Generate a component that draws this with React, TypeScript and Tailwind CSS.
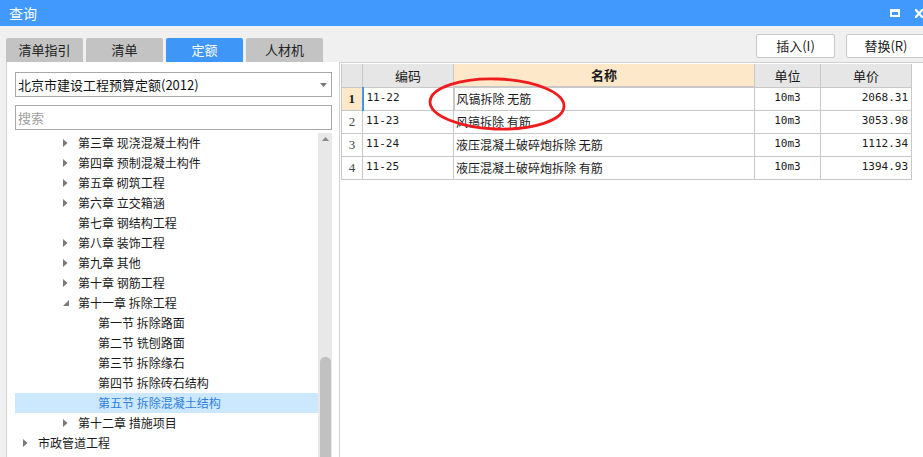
import React from 'react';

type TreeNode = {
  label: string;
  level: number;
  arrow: 'closed' | 'open' | 'none';
  selected?: boolean;
};

const treeNodes: TreeNode[] = [
  { label: '第三章 现浇混凝土构件', level: 1, arrow: 'closed' },
  { label: '第四章 预制混凝土构件', level: 1, arrow: 'closed' },
  { label: '第五章 砌筑工程', level: 1, arrow: 'closed' },
  { label: '第六章 立交箱涵', level: 1, arrow: 'closed' },
  { label: '第七章 钢结构工程', level: 1, arrow: 'none' },
  { label: '第八章 装饰工程', level: 1, arrow: 'closed' },
  { label: '第九章 其他', level: 1, arrow: 'closed' },
  { label: '第十章 钢筋工程', level: 1, arrow: 'closed' },
  { label: '第十一章 拆除工程', level: 1, arrow: 'open' },
  { label: '第一节 拆除路面', level: 2, arrow: 'none' },
  { label: '第二节 铣刨路面', level: 2, arrow: 'none' },
  { label: '第三节 拆除缘石', level: 2, arrow: 'none' },
  { label: '第四节 拆除砖石结构', level: 2, arrow: 'none' },
  { label: '第五节 拆除混凝土结构', level: 2, arrow: 'none', selected: true },
  { label: '第十二章 措施项目', level: 1, arrow: 'closed' },
  { label: '市政管道工程', level: 0, arrow: 'closed' },
];

const rows = [
  { no: 1, code: '11-22', name: '风镐拆除　无筋', unit: '10m3', price: '2068.31' },
  { no: 2, code: '11-23', name: '风镐拆除　有筋', unit: '10m3', price: '3053.98' },
  { no: 3, code: '11-24', name: '液压混凝土破碎炮拆除　无筋', unit: '10m3', price: '1112.34' },
  { no: 4, code: '11-25', name: '液压混凝土破碎炮拆除　有筋', unit: '10m3', price: '1394.93' },
];

const tabs = [
  { label: '清单指引', active: false },
  { label: '清单', active: false },
  { label: '定额', active: true },
  { label: '人材机', active: false },
];

const cjk = "font-['Microsoft_YaHei','Noto_Sans_CJK_SC',sans-serif]";
const mono = "font-['DejaVu_Sans_Mono','Noto_Sans_CJK_SC',monospace]";

function Arrow({ kind }: { kind: TreeNode['arrow'] }) {
  if (kind === 'none') return <span className="w-[15px]" />;
  return (
    <span className="flex w-[15px] items-center justify-start">
      {kind === 'closed' ? (
        <svg width="5" height="8" viewBox="0 0 5 8">
          <path d="M0 0 L4.5 4 L0 8 Z" fill="#7a7a7a" />
        </svg>
      ) : (
        <svg width="6" height="6" viewBox="0 0 6 6">
          <path d="M6 0 L6 6 L0 6 Z" fill="#7a7a7a" />
        </svg>
      )}
    </span>
  );
}

function TreePanel() {
  return (
    <div className="relative flex-1 overflow-hidden pl-[8px]">
      <div className="mr-[21px] flex flex-col">
        {treeNodes.map((node) => (
          <div
            key={node.label}
            className={
              'flex h-[20px] items-center text-[12px] ' +
              (node.selected ? 'bg-[#cce8ff] text-[#2e7fdc]' : 'text-[#1a1a1a]')
            }
          >
            <span
              className={
                node.level === 0 ? 'w-[8px]' : node.level === 1 ? 'w-[48px]' : 'w-[68px]'
              }
            />
            <Arrow kind={node.arrow} />
            <span className="whitespace-nowrap">{node.label}</span>
          </div>
        ))}
      </div>
      <div className="absolute right-[7px] top-0 bottom-0 flex w-[14px] flex-col items-center bg-[#e8e8e8]">
        <svg width="9" height="5" viewBox="0 0 9 5" className="mt-[4px]">
          <path d="M0 5 L4.5 0 L9 5 Z" fill="#8a8a8a" />
        </svg>
        <div className="mt-[216px] h-[120px] w-[11px] rounded-t-[5px] bg-[#c1c1c1]" />
      </div>
    </div>
  );
}

function QuotaTable() {
  const cell = 'border-r border-b border-[#c8c8c8] h-[23px]';
  return (
    <div className="relative">
      <table className={'border-collapse text-[12px] text-[#1a1a1a] ' + cjk}>
        <colgroup>
          <col className="w-[21px]" />
          <col className="w-[91px]" />
          <col className="w-[301px]" />
          <col className="w-[66px]" />
          <col className="w-[91px]" />
        </colgroup>
        <thead>
          <tr className="text-[13px]">
            <th className={cell + ' border-l bg-[#e6e6e6] font-normal'} />
            <th className={cell + ' bg-[#e6e6e6] font-normal'}>编码</th>
            <th className={cell + ' bg-[#fde8c9] font-semibold'}>名称</th>
            <th className={cell + ' bg-[#e6e6e6] font-normal'}>单位</th>
            <th className={cell + ' bg-[#e6e6e6] font-normal'}>单价</th>
          </tr>
        </thead>
        <tbody>
          {rows.map((r) => {
            const first = r.no === 1;
            return (
              <tr key={r.no}>
                <td
                  className={
                    cell +
                    " border-l text-center font-['Liberation_Serif',serif] text-[13px] " +
                    (first ? 'bg-[#fde8c9] font-bold' : 'text-[#444]')
                  }
                >
                  {r.no}
                </td>
                <td
                  className={
                    cell +
                    ' pl-[3px] text-[11px] ' +
                    mono +
                    (first ? ' border-l-2 border-l-[#3e95f5]' : '')
                  }
                >
                  {r.code}
                </td>
                <td
                  className={
                    cell +
                    ' pl-[2px] whitespace-nowrap' +
                    (first ? ' border-2 border-[#7a7a7a] border-t-[#c8c8c8]' : '')
                  }
                >
                  {r.name.replace('　', ' ')}
                </td>
                <td className={cell + ' text-center text-[11px] ' + mono}>{r.unit}</td>
                <td className={cell + ' pr-[3px] text-right text-[11px] ' + mono}>{r.price}</td>
              </tr>
            );
          })}
        </tbody>
      </table>
      <svg
        className="pointer-events-none absolute left-[86px] top-[13px]"
        width="140"
        height="54"
        viewBox="0 0 140 54"
      >
        <ellipse
          cx="70"
          cy="27"
          rx="67"
          ry="25"
          fill="none"
          stroke="#ee1c1c"
          strokeWidth="2.8"
          transform="rotate(2 70 27)"
        />
      </svg>
    </div>
  );
}

export default function App() {
  return (
    <div className={'flex h-[457px] w-[923px] flex-col overflow-hidden bg-[#f0f0f0] ' + cjk}>
      {/* title bar */}
      <div className="flex h-[26px] items-center bg-[#4299fd] pl-[9px] text-[14px] text-white">
        <span>查询</span>
        <div className="ml-auto flex items-center gap-[15px]">
          <span className="h-[8px] w-[10px] border-2 border-t-[3px] border-white" />
          <svg width="8" height="9" viewBox="0 0 8 9">
            <path d="M0 0 L8 9 M8 0 L0 9" stroke="white" strokeWidth="2.2" />
          </svg>
        </div>
      </div>

      {/* tabs + actions */}
      <div className="flex h-[36px] items-end">
        <div className="ml-[6px] flex gap-[3px]">
          {tabs.map((t) => (
            <div
              key={t.label}
              className={
                'flex h-[24px] w-[77px] items-center justify-center rounded-t-[2px] text-[13px] ' +
                (t.active ? 'bg-[#3e96f7] text-white' : 'bg-[#c3c3c3] text-[#222]')
              }
            >
              {t.label}
            </div>
          ))}
        </div>
        <div className="ml-auto flex gap-[11px] self-start pt-[8px]">
          <button className="h-[24px] w-[79px] rounded-[2px] border border-[#c8c8c8] bg-white text-[13px] text-[#222]">
            插入(I)
          </button>
          <button className="-mr-[3px] h-[24px] w-[80px] rounded-[2px] border border-[#c8c8c8] bg-white text-[13px] text-[#222]">
            替换(R)
          </button>
        </div>
      </div>

      {/* content */}
      <div className="flex min-h-0 flex-1">
        <div className="ml-[6px] flex w-[334px] flex-col border-x border-[#d0d0d0] bg-white">
          <div className="flex flex-col gap-[8px] px-[8px] pt-[10px] pb-[3px]">
            <div className="flex h-[25px] w-[317px] items-center border border-[#a8a8a8] pl-[2px] pr-[4px] text-[13px] text-[#111]">
              <span>北京市建设工程预算定额(2012)</span>
              <svg className="ml-auto" width="7" height="4" viewBox="0 0 7 4">
                <path d="M0 0 L7 0 L3.5 4 Z" fill="#777" />
              </svg>
            </div>
            <div className="flex h-[25px] w-[317px] items-center border border-[#a8a8a8] pl-[2px] text-[13px] text-[#a0a0a0]">
              搜索
            </div>
          </div>
          <TreePanel />
        </div>
        <div className="flex-1 border-t border-[#d0d0d0] bg-white pl-[1px] pt-[1px]">
          <QuotaTable />
        </div>
      </div>
    </div>
  );
}
